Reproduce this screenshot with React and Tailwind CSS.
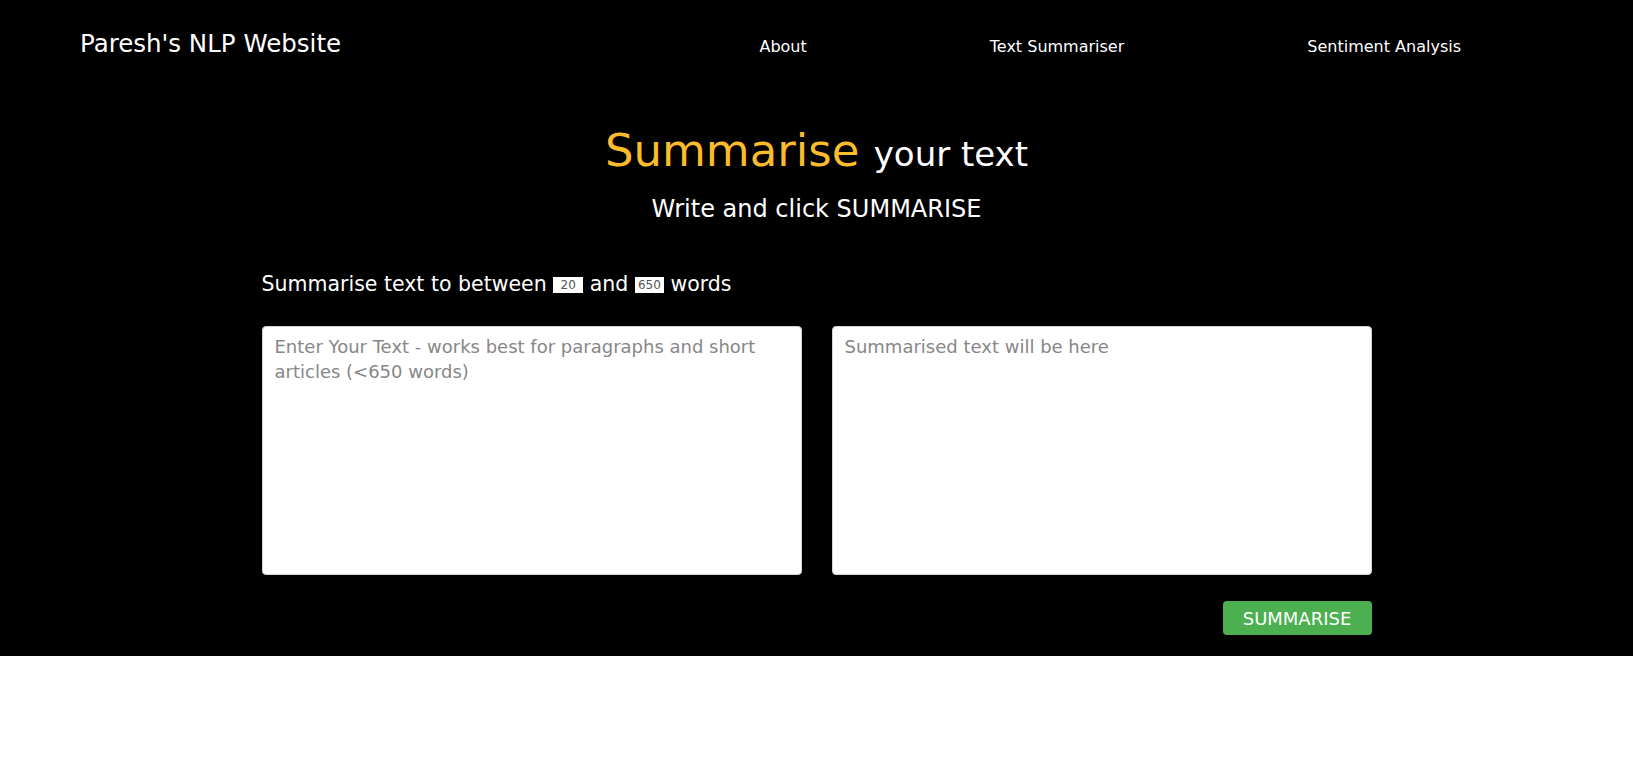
import React, { useState } from 'react';

const NAV_LINKS = ['About', 'Text Summariser', 'Sentiment Analysis'];

const App = () => {
  const [text, setText] = useState('');
  const [minWords, setMinWords] = useState('20');
  const [maxWords, setMaxWords] = useState('650');

  return (
    <div className="min-h-screen bg-white font-['DejaVu_Sans',sans-serif]">
      <div className="bg-black text-white pb-[21px]">
        <header className="flex items-baseline pt-[29px] pl-[80px] pr-[172px]">
          <a href="#" className="text-[24.5px] leading-[1.2] text-white">
            Paresh's NLP Website
          </a>
          <nav className="ml-auto flex items-baseline gap-[183px]">
            {NAV_LINKS.map((link) => (
              <a key={link} href="#" className="text-[16px] leading-[1.2] text-white">
                {link}
              </a>
            ))}
          </nav>
        </header>

        <main className="mx-auto max-w-[1140px] px-[15px]">
          <h1 className="mt-[66px] text-center text-[45px] leading-[54px]">
            <span className="text-[#fbbc2c]">Summarise</span>{' '}
            <span className="text-[34px]">your text</span>
          </h1>
          <h2 className="mt-[14px] text-center text-[24px] leading-[29px]">
            Write and click SUMMARISE
          </h2>

          <p className="mt-[45px] text-[20.5px] leading-[30px]">
            Summarise text to between{' '}
            <input
              type="text"
              value={minWords}
              onChange={(e) => setMinWords(e.target.value)}
              className="inline-block h-[16px] w-[30px] bg-white px-0 text-center align-middle text-[12px] text-[#555] outline-none"
            />{' '}
            and{' '}
            <input
              type="text"
              value={maxWords}
              onChange={(e) => setMaxWords(e.target.value)}
              className="inline-block h-[16px] w-[29px] bg-white px-0 text-center align-middle text-[12px] text-[#555] outline-none"
            />{' '}
            words
          </p>

          <div className="mt-[27px] grid grid-cols-2 gap-[30px]">
            <textarea
              value={text}
              onChange={(e) => setText(e.target.value)}
              placeholder="Enter Your Text - works best for paragraphs and short articles (<650 words)"
              className="h-[249px] resize-none rounded-[4px] border border-[#ced4da] bg-white px-[12px] pt-[7px] pb-[6px] text-[18px] leading-[25px] text-[#495057] outline-none placeholder:text-[#878787]"
            />
            <textarea
              readOnly
              placeholder="Summarised text will be here"
              className="h-[249px] resize-none rounded-[4px] border border-[#ced4da] bg-white px-[12px] pt-[7px] pb-[6px] text-[18px] leading-[25px] text-[#495057] outline-none placeholder:text-[#878787]"
            />
          </div>

          <div className="mt-[26px] flex justify-end">
            <button
              type="button"
              className="h-[34px] w-[149px] rounded-[4px] bg-[#4caf50] text-[18px] text-white"
            >
              SUMMARISE
            </button>
          </div>
        </main>
      </div>
    </div>
  );
};

export default App;
